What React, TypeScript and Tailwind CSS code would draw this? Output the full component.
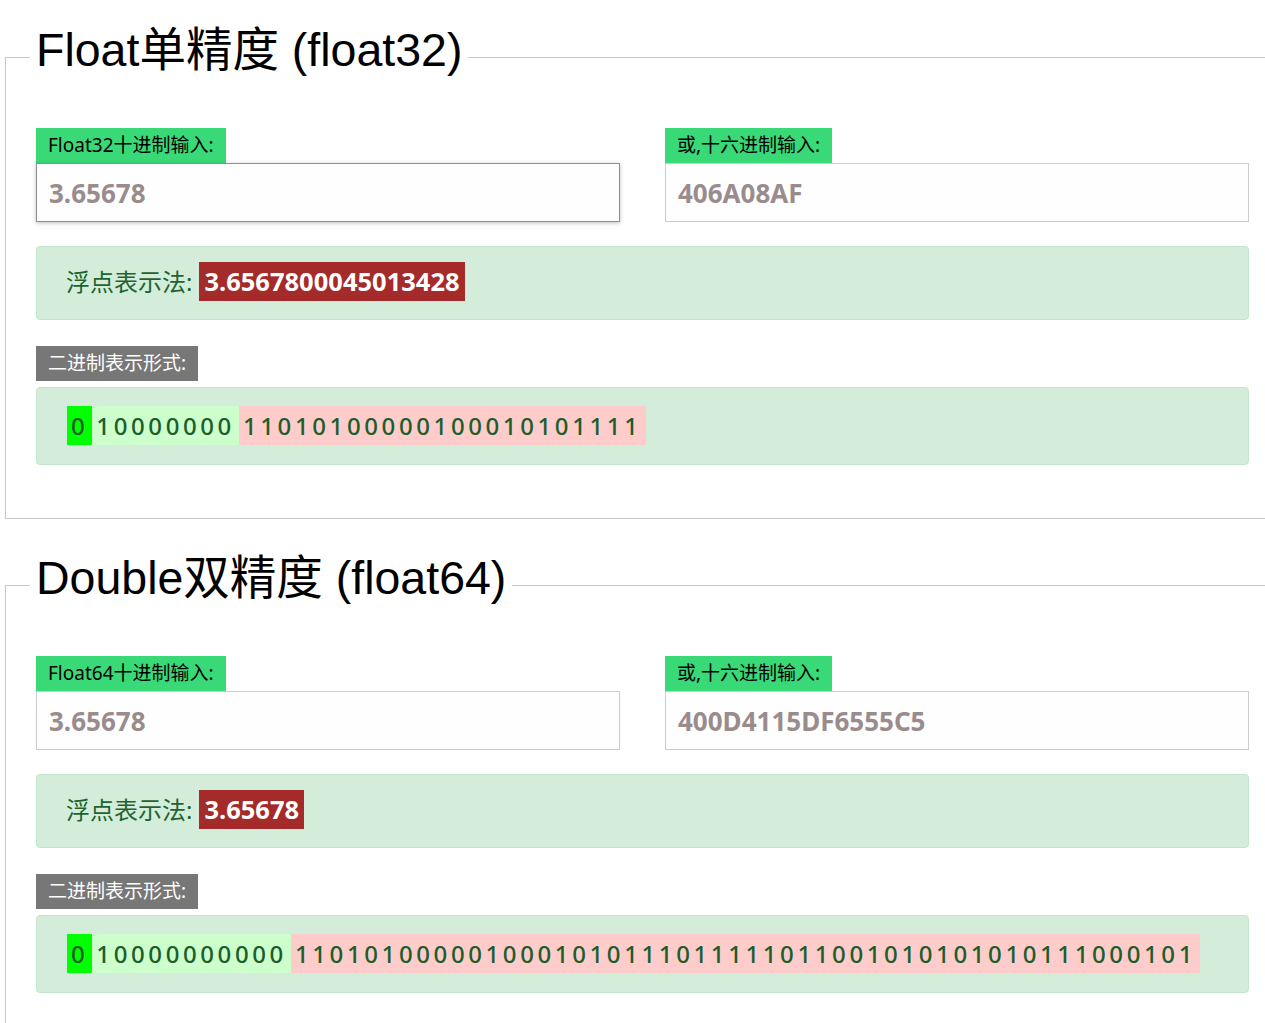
import { useState } from "react";

const cjk = "font-['Noto_Sans','Noto_Sans_CJK_SC',sans-serif]";

type Section = {
  title: string;
  decLabel: string;
  dec: string;
  hex: string;
  value: string;
  sign: string;
  exp: string;
  frac: string;
  focus?: boolean;
};

const sections: Section[] = [
  {
    title: "Float单精度 (float32)",
    decLabel: "Float32十进制输入:",
    dec: "3.65678",
    hex: "406A08AF",
    value: "3.6567800045013428",
    sign: "0",
    exp: "10000000",
    frac: "11010100000100010101111",
    focus: true,
  },
  {
    title: "Double双精度 (float64)",
    decLabel: "Float64十进制输入:",
    dec: "3.65678",
    hex: "400D4115DF6555C5",
    value: "3.65678",
    sign: "0",
    exp: "10000000000",
    frac: "1101010000010001010111011111011001010101010111000101",
  },
];

const Field = ({ label, value, focus }: { label: string; value: string; focus?: boolean }) => {
  const [val, setVal] = useState(value);
  return (
    <div className="flex flex-col items-start">
      <span className={`h-[35px] leading-[35px] px-[12px] bg-[#3ad977] text-black text-[19px] ${cjk}`}>
        {label}
      </span>
      <input
        autoFocus={focus}
        value={val}
        onChange={(e) => setVal(e.target.value)}
        className={`w-full h-[59px] px-[12px] bg-[#fefefe] border outline-none text-[26px] font-bold text-[#9a8c8c] ${cjk} ${
          focus ? "border-[#8f8f8f] shadow-[0_1px_4px_rgba(0,0,0,0.25)]" : "border-[#cccccc]"
        }`}
      />
    </div>
  );
};

const Converter = ({ s, first }: { s: Section; first?: boolean }) => (
  <fieldset
    className={`ml-[5px] w-[1275px] border border-[#c8c8c8] px-[30px] pt-[37px] pb-[53px] ${first ? "" : "mt-[32px]"}`}
  >
    <legend className="ml-[-6px] px-[6px] pb-[14px] leading-[54px] text-[46.5px] text-black font-['Liberation_Sans','Noto_Sans_CJK_SC',sans-serif]">
      {s.title}
    </legend>

    <div className="grid grid-cols-2 gap-[45px]">
      <Field label={s.decLabel} value={s.dec} focus={s.focus} />
      <Field label="或,十六进制输入:" value={s.hex} />
    </div>

    {/* 浮点表示 */}
    <div className={`mt-[24px] flex items-center border border-[#c3e6cb] bg-[#d4edda] rounded-[4px] px-[29px] pt-[15px] pb-[18px] ${cjk}`}>
      <span className="text-[24px] text-[#1d6430]">浮点表示法:</span>
      <span className="ml-[7px] h-[39px] leading-[39px] px-[5px] bg-[#a52a2a] text-white font-bold text-[25.5px]">
        {s.value}
      </span>
    </div>

    <div className={`mt-[26px] inline-block h-[35px] leading-[35px] px-[12px] bg-[#777777] text-white text-[19px] ${cjk}`}>
      二进制表示形式:
    </div>

    {/* 二进制 */}
    <div className="mt-[6px] flex border border-[#c3e6cb] bg-[#d4edda] rounded-[4px] px-[30px] pt-[18px] pb-[19px]">
      <div className="flex text-[24px] font-medium tracking-[3.6px] text-[#1b5e2a] font-['Noto_Sans',sans-serif]">
        <span className="h-[39px] leading-[39px] px-[4px] bg-[#00ff00]">{s.sign}</span>
        <span className="h-[39px] leading-[39px] px-[4px] bg-[#ccffcc]">{s.exp}</span>
        <span className="h-[39px] leading-[39px] px-[4px] bg-[#ffcccc]">{s.frac}</span>
      </div>
    </div>
  </fieldset>
);

export default function App() {
  return (
    <div className="w-full overflow-hidden bg-white pt-[23px] pb-[20px]">
      {sections.map((s, i) => (
        <Converter key={s.title} s={s} first={i === 0} />
      ))}
    </div>
  );
}
